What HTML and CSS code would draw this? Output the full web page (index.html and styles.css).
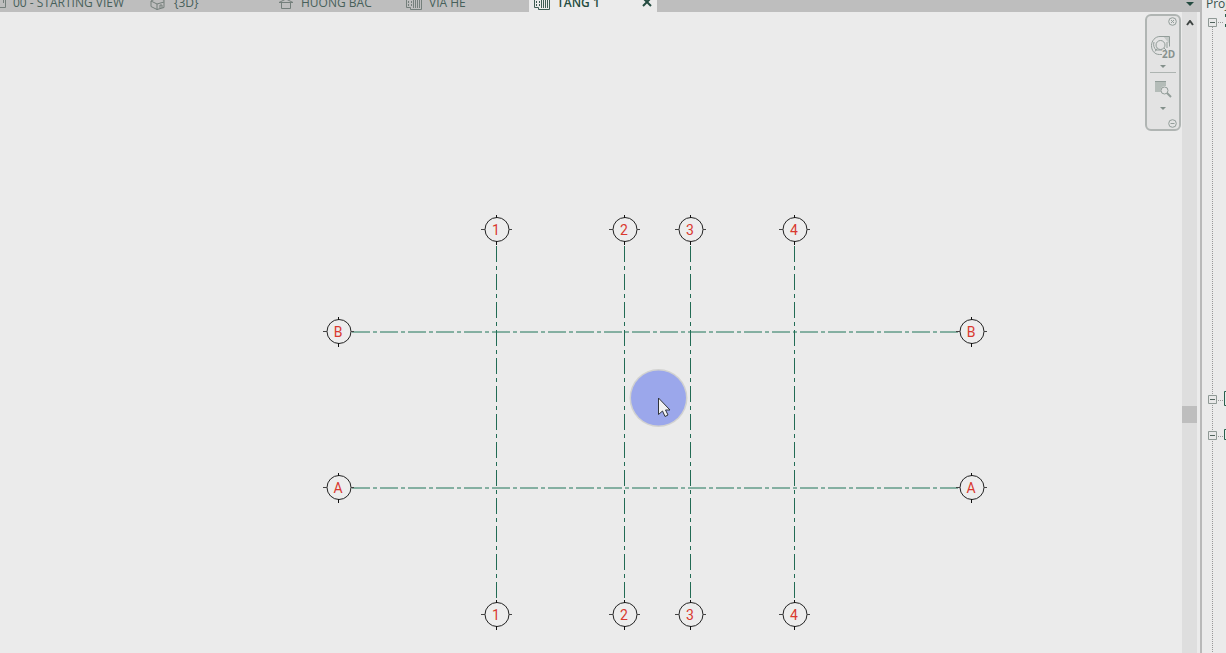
FILE: index.html
```html
<!DOCTYPE html>
<html lang="vi">
<head>
<meta charset="utf-8">
<title>Floor plan</title>
<link rel="stylesheet" href="styles.css">
</head>
<body>
<div class="app">
  <main class="workspace">
    <nav class="tabs" aria-label="Open views">
      <button class="tab tab-start"><svg class="icon" viewBox="0 0 10 16"><path d="M-3 2.500h8.500v9h-8.500M3.500 4v3"/></svg><span>00 - STARTING VIEW</span></button>
      <button class="tab tab-3d"><svg class="icon" viewBox="0 0 16 16"><path d="M1 5l6 3v5.500l-6-3zM7 8l7-2v5.500l-7 2M1 5l6-3 7 2v2M10 12.500V9h2v3"/></svg><span>{3D}</span></button>
      <button class="tab tab-north"><svg class="icon" viewBox="0 0 16 16"><path d="M1 6.500L8 3l7 3.500zM3.500 6.500v6h9v-6"/></svg><span>HUONG BAC</span></button>
      <button class="tab tab-via"><svg class="icon" viewBox="0 0 16 16"><path d="M.5 2v9.500h4v2h11V2"/><path d="M2.500 2v8M5.500 2v8" stroke-dasharray="2 1"/><path d="M7.500 4v8M9.500 4v8M11.500 4v8M13.500 4v8"/></svg><span>VIA HE</span></button>
      <button class="tab tab-active"><svg class="icon" viewBox="0 0 16 16"><path d="M.5 2v9.500h4v2h11V2"/><path d="M2.500 2v8M5.500 2v8" stroke-dasharray="2 1"/><path d="M7.500 4v8M9.500 4v8M11.500 4v8M13.500 4v8"/></svg><span>TANG 1</span><svg class="close" viewBox="0 0 10 10"><path d="M1 1l8 8M9 1L1 9"/></svg></button>
      <button class="tab-list" aria-label="List of views"><svg viewBox="0 0 8 4"><path d="M0 0h8L4 4z"/></svg></button>
    </nav>
    <div class="view">
      <div class="canvas">
        <svg class="plan" width="1182" height="641" viewBox="0 12 1182 641">
          <defs>
            <g id="head">
              <circle cx="1" cy=".5" r="12" class="bubble"/>
              <path d="M.5 -14v3M.5 12v4" class="tick"/>
              <path d="M-15 .5h4M13 .5h3" class="tick side"/>
            </g>
          </defs>
          <g class="grid-v">
            <path d="M496.500 246V602M624.500 246V602M690.500 246V602M794.500 246V602"/>
          </g>
          <g class="grid-h">
            <path d="M352 332H959M352 488H959"/>
          </g>
          <g>
            <use href="#head" x="496" y="229"/><use href="#head" x="624" y="229"/><use href="#head" x="690" y="229"/><use href="#head" x="794" y="229"/>
            <use href="#head" x="496" y="614"/><use href="#head" x="624" y="614"/><use href="#head" x="690" y="614"/><use href="#head" x="794" y="614"/>
            <use href="#head" x="338" y="331"/><use href="#head" x="971" y="331"/><use href="#head" x="338" y="487"/><use href="#head" x="971" y="487"/>
          </g>
          <g class="label">
            <text x="496" y="235">1</text><text x="624" y="235">2</text><text x="690" y="235">3</text><text x="794" y="235">4</text>
            <text x="496" y="620">1</text><text x="624" y="620">2</text><text x="690" y="620">3</text><text x="794" y="620">4</text>
            <text x="338" y="337">B</text><text x="971" y="337">B</text><text x="338" y="493">A</text><text x="971" y="493">A</text>
          </g>
          <circle cx="658.500" cy="398" r="29" class="halo"/>
          <circle cx="658.500" cy="398" r="27.500" class="spot"/>
          <path d="M658.500 398v16.500l4-3.500 2.500 5.500 3-1.500-2.500-5h4.500z" class="pointer"/>
        </svg>
        <div class="navbar">
          <button class="nav-small" aria-label="Close"><svg viewBox="0 0 9 9"><circle cx="4.500" cy="4.500" r="3.800"/><path d="M3 3l3 3M6 3L3 6"/></svg></button>
          <button class="nav-wheel" aria-label="Steering wheel 2D"><svg viewBox="0 0 26 26"><path d="M13 2h6.500v8z" class="hatch"/><path d="M12 20.500H9.500C4 20.500 1.500 16 1.500 11.500S5 2.500 10 2.500h9.500v10"/><circle cx="10.500" cy="11" r="4.500"/><path d="M4 8c-1 3 0 6 2 8h6M7 14.500l-2 3M14 14l2 2M17 8v6"/><text x="12" y="24">2D</text></svg></button>
          <button class="nav-drop" aria-label="Wheel options"><svg viewBox="0 0 6 3"><path d="M0 0h6L3 3z"/></svg></button>
          <hr>
          <button class="nav-zoom" aria-label="Zoom region"><svg viewBox="0 0 18 18"><path d="M1 1h11v5c-4 0-6 2-5 6H1z" class="shade"/><path d="M1 1.500h11"/><circle cx="10.500" cy="10.500" r="3.500" class="lens"/><path d="M13 13l4 4" class="handle"/></svg></button>
          <button class="nav-drop" aria-label="Zoom options"><svg viewBox="0 0 6 3"><path d="M0 0h6L3 3z"/></svg></button>
          <button class="nav-small nav-end" aria-label="Customize"><svg viewBox="0 0 9 9"><circle cx="4.500" cy="4.500" r="3.800"/><path d="M2.500 4.500h4"/></svg></button>
        </div>
      </div>
      <div class="scroll">
        <button class="scroll-up" aria-label="Scroll up"><svg viewBox="0 0 8 6"><path d="M1 5l3-4 3 4"/></svg></button>
        <div class="thumb"></div>
      </div>
    </div>
  </main>
  <div class="divider"></div>
  <aside class="browser">
    <h2>Project Browser</h2>
    <div class="tree">
      <svg width="22" height="641" viewBox="1204 12 22 641">
        <path d="M1212.500 27V653M1218 22.500h6M1218 400.500h6M1218 436.500h6" class="link"/>
        <g class="box"><path d="M1208.500 18.500h8v8h-8zM1208.500 395.500h8v8h-8zM1208.500 431.500h8v8h-8z"/></g>
        <path d="M1210 22.500h5M1210 399.500h5M1210 435.500h5" class="minus"/>
        <path d="M1226 391.500h-1.500v14h1.500M1226 429.500h-1.500v10h1.500M1225.500 14v3M1225.500 24v3" class="node"/>
      </svg>
    </div>
  </aside>
</div>
</body>
</html>
```
FILE: styles.css
```css
* { box-sizing: border-box; }
body { margin: 0; height: 100vh; overflow: hidden; background: #ebebeb; font-family: "Open Sans", "Noto Sans", sans-serif; }
button { border: 0; padding: 0; background: none; font: inherit; color: inherit; }
svg { display: block; fill: none; }
.app { display: flex; height: 100%; }
.workspace { flex: 1; min-width: 0; display: flex; flex-direction: column; }

.tabs { display: flex; align-items: flex-end; height: 12px; overflow: hidden; background: #bebebe; color: #47605a; font-size: 12px; line-height: 16px; }
.tab { display: flex; flex: none; align-items: center; height: 16px; gap: 7px; white-space: nowrap; }
.tab span { height: 18px; }
.icon { flex: none; width: 16px; height: 16px; stroke: #747f7b; }
.tab-start { width: 150px; gap: 3px; }
.tab-start .icon { width: 10px; }
.tab-3d { width: 128px; gap: 8px; }
.tab-north { width: 128px; }
.tab-via { width: 123px; }
.tab-active { width: 128px; padding: 0 5px; background: #ebebeb; color: #244b40; font-weight: 600; }
.tab-active .icon { stroke: #3d5b52; }
.close { width: 10px; height: 10px; margin: 0 0 4px auto; stroke: #244b40; stroke-width: 2; }
.tab-list { margin: 0 6px 6px auto; }
.tab-list svg { width: 8px; height: 4px; fill: #244b40; }

.view { flex: 1; min-height: 0; display: flex; }
.canvas { position: relative; flex: 1; min-width: 0; overflow: hidden; }
.grid-v { stroke: #226b54; stroke-dasharray: 16 4 4 4; }
.grid-h { stroke: #1f7558; stroke-dasharray: 18 3 4 3; }
.bubble { fill: #ededed; stroke: #222; }
.tick { stroke: #111; }
.side { stroke: #444; }
.label { fill: #d9392f; font: 14px Roboto, "Liberation Sans", Arial, sans-serif; text-anchor: middle; }
.halo { fill: #d2d2d0; }
.spot { fill: #9ba7eb; }
.pointer { fill: #f2f2f2; stroke: #30343c; }

.navbar { position: absolute; top: 2px; right: 1px; width: 36px; padding: 1px 3px; display: flex; flex-direction: column; align-items: center; border: 2px solid #b0b5b3; border-radius: 6px; background: #e3e3e3; stroke: #929d99; }
.nav-small { align-self: flex-end; margin-right: -1px; }
.nav-small svg { width: 9px; height: 9px; }
.nav-wheel { margin-top: 8px; }
.nav-wheel svg { width: 26px; height: 26px; }
.nav-wheel text { fill: #87918e; stroke: none; font: bold 10px "Open Sans", sans-serif; }
.hatch { fill: #c4c9c7; stroke: none; }
.nav-drop { margin: 5px 0 4px; }
.nav-drop svg { width: 6px; height: 3px; fill: #83908b; stroke: none; }
.navbar hr { width: 26px; height: 1px; margin: 0 0 7px; border: 0; background: #adb4b1; }
.nav-zoom svg { width: 18px; height: 18px; }
.nav-zoom + .nav-drop { margin-top: 9px; }
.shade { fill: #b4bcb8; stroke: none; }
.lens { fill: #e3e3e3; }
.handle { stroke-width: 2; }
.nav-end { margin-top: 5px; }

.scroll { width: 15px; margin-right: 3px; display: flex; flex-direction: column; background: #dedede; }
.scroll-up { display: flex; justify-content: center; padding-top: 8px; }
.scroll-up svg { width: 8px; height: 6px; stroke: #3f4543; stroke-width: 2; }
.thumb { height: 17px; margin-top: 380px; background: #bebebe; }

.divider { width: 2px; background: #b9b9b9; }
.browser { width: 24px; padding-left: 2px; overflow: hidden; }
.browser h2 { height: 12px; margin: 0; padding-left: 2px; color: #38524b; font-size: 12px; font-weight: 400; line-height: 7px; white-space: nowrap; }
.link { stroke: #999; stroke-dasharray: 1 1; }
.box { fill: #e8e8e8; stroke: #8f9995; }
.minus { stroke: #51645d; }
.node { stroke: #28614d; }
```
